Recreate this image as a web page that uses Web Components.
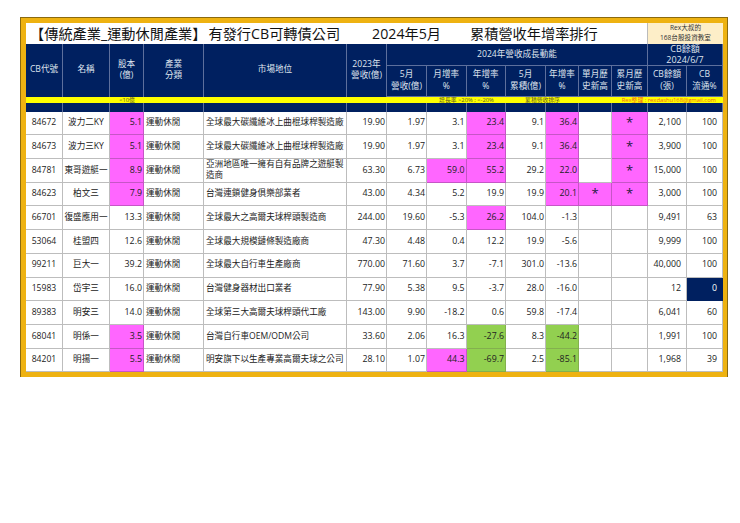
<!DOCTYPE html>
<html lang="zh-Hant">
<head>
<meta charset="utf-8">
<title>CB ranking</title>
<style>
  html, body { margin: 0; background: #fff; }
  body {
    padding: 18px 13px 0 21px;
    font-family: "Open Sans", "Noto Sans CJK TC", sans-serif;
    --cols: 37px 47px 34px 60px 143px 40px 40px 39.5px 39.5px 40px 33px 33px 36px 39px 36px;
    --navy: #002060;
    --pink: #ff66ff;
    --green: #92d050;
  }
</style>
</head>
<body>
<cb-sheet>
  <cb-title></cb-title>
  <cb-head></cb-head>
  <cb-note></cb-note>
  <cb-row code="84672" name="波力二KY" cap="5.1:p" pos="全球最大碳纖維冰上曲棍球桿製造廠" rev="19.90" m="1.97" mr="3.1" yr="23.4:p" acc="9.1" ar="36.4:p" hc="*" qty="2,100" flow="100"></cb-row>
  <cb-row code="84673" name="波力三KY" cap="5.1:p" pos="全球最大碳纖維冰上曲棍球桿製造廠" rev="19.90" m="1.97" mr="3.1" yr="23.4:p" acc="9.1" ar="36.4:p" hc="*" qty="3,900" flow="100"></cb-row>
  <cb-row code="84781" name="東哥遊艇一" cap="8.9:p" pos="亞洲地區唯一擁有自有品牌之遊艇製造商" rev="63.30" m="6.73" mr="59.0:p" yr="55.2:p" acc="29.2" ar="22.0:p" hc="*" qty="15,000" flow="100"></cb-row>
  <cb-row code="84623" name="柏文三" cap="7.9:p" pos="台灣連鎖健身俱樂部業者" rev="43.00" m="4.34" mr="5.2" yr="19.9" acc="19.9" ar="20.1:p" hm="*" hc="*" qty="3,000" flow="100"></cb-row>
  <cb-row code="66701" name="復盛應用一" cap="13.3" pos="全球最大之高爾夫球桿頭製造商" rev="244.00" m="19.60" mr="-5.3" yr="26.2:p" acc="104.0" ar="-1.3" qty="9,491" flow="63"></cb-row>
  <cb-row code="53064" name="桂盟四" cap="12.6" pos="全球最大規模鏈條製造廠商" rev="47.30" m="4.48" mr="0.4" yr="12.2" acc="19.9" ar="-5.6" qty="9,999" flow="100"></cb-row>
  <cb-row code="99211" name="巨大一" cap="39.2" pos="全球最大自行車生產廠商" rev="770.00" m="71.60" mr="3.7" yr="-7.1" acc="301.0" ar="-13.6" qty="40,000" flow="100"></cb-row>
  <cb-row code="15983" name="岱宇三" cap="16.0" pos="台灣健身器材出口業者" rev="77.90" m="5.38" mr="9.5" yr="-3.7" acc="28.0" ar="-16.0" qty="12" flow="0:n"></cb-row>
  <cb-row code="89383" name="明安三" cap="14.0" pos="全球第三大高爾夫球桿頭代工廠" rev="143.00" m="9.90" mr="-18.2" yr="0.6" acc="59.8" ar="-17.4" qty="6,041" flow="60"></cb-row>
  <cb-row code="68041" name="明係一" cap="3.5:p" pos="台灣自行車OEM/ODM公司" rev="33.60" m="2.06" mr="16.3" yr="-27.6:g" acc="8.3" ar="-44.2:g" qty="1,991" flow="100"></cb-row>
  <cb-row code="84201" name="明揚一" cap="5.5:p" pos="明安旗下以生產專業高爾夫球之公司" rev="28.10" m="1.07" mr="44.3:p" yr="-69.7:g" acc="2.5" ar="-85.1:g" qty="1,968" flow="39"></cb-row>
</cb-sheet>

<script>
// Outer gold frame
class CbSheet extends HTMLElement {
  constructor() {
    super();
    this.attachShadow({ mode: 'open' });
    this.shadowRoot.innerHTML = `
      <style>
        :host {
          display: block;
          width: 697px;
          border: solid #eeb211;
          border-width: 5px 4px 5px 5px;
          outline: 0.5px solid #8a6a10;
        }
      </style>
      <slot></slot>`;
  }
}

// Title strip with the logo box on the right
class CbTitle extends HTMLElement {
  constructor() {
    super();
    this.attachShadow({ mode: 'open' });
    this.shadowRoot.innerHTML = `
      <style>
        :host {
          display: grid;
          grid-template-columns: 621px 76px;
          height: 20.5px;
          color: #111;
        }
        .main {
          display: flex;
          align-items: center;
          padding-left: 4px;
          font-size: 14.2px;
          white-space: nowrap;
        }
        .when { margin-left: 32px; }
        .rank { margin-left: 29px; }
        .cls { margin-left: 2px; }
        .logo {
          background: #fdeec8;
          border-left: 1px solid #bbb;
          font-size: 6.6px;
          line-height: 10px;
          text-align: center;
          color: #333;
        }
      </style>
      <div class="main">
        <span>【傳統產業_運動休閒產業】</span><span class="cls">有發行CB可轉債公司</span><span class="when">2024年5月</span><span class="rank">累積營收年增率排行</span>
      </div>
      <div class="logo">Rex大叔的<br>168台股投資教室</div>`;
  }
}

// Navy table header, two rows with spans
class CbHead extends HTMLElement {
  constructor() {
    super();
    this.attachShadow({ mode: 'open' });
    const tall = ['CB代號', '名稱', '股本<br>(億)', '產業<br>分類', '市場地位', '2023年<br>營收(億)'];
    const low = ['5月<br>營收(億)', '月增率<br>%', '年增率<br>%', '5月<br>累積(億)', '年增率<br>%', '單月歷<br>史新高', '累月歷<br>史新高', 'CB餘額<br>(張)', 'CB<br>流通%'];
    this.shadowRoot.innerHTML = `
      <style>
        :host {
          display: grid;
          grid-template-columns: var(--cols);
          grid-template-rows: 22.5px 30.5px;
          background: var(--navy);
          color: #dfe4ee;
          font-size: 8.6px;
          line-height: 11.5px;
          text-align: center;
        }
        div {
          display: flex;
          align-items: center;
          justify-content: center;
          box-sizing: border-box;
          border-right: 1px solid #5d6f9c;
          border-bottom: 1px solid #5d6f9c;
        }
        .tall { grid-row: span 2; border-bottom: 0; }
        .wide { grid-column: span 7; }
        .stock { grid-column: span 2; font-size: 9px; }
      </style>
      ${tall.map((t) => `<div class="tall"><span>${t}</span></div>`).join('')}
      <div class="wide">2024年營收成長動能</div>
      <div class="stock"><span>CB餘額<br>2024/6/7</span></div>
      ${low.map((t) => `<div><span>${t}</span></div>`).join('')}`;
  }
}

// Yellow remark bar and the empty navy strip under it
class CbNote extends HTMLElement {
  constructor() {
    super();
    this.attachShadow({ mode: 'open' });
    const strip = Array(15).fill('<i></i>').join('');
    this.shadowRoot.innerHTML = `
      <style>
        :host { display: block; }
        .bar {
          display: grid;
          grid-template-columns: var(--cols);
          height: 6.5px;
          background: #ffff00;
          box-sizing: border-box;
          color: #5a5a20;
          font-size: 5.8px;
          line-height: 6.5px;
          white-space: nowrap;
        }
        .bar span { text-align: center; }
        .cap { grid-column: 3; }
        .up { grid-column: 8 / span 2; }
        .acc { grid-column: 10 / span 2; }
        .bar .mail { grid-column: 12 / span 4; color: #f0641e; text-align: right; padding-right: 7px; }
        .strip {
          display: grid;
          grid-template-columns: var(--cols);
          height: 8.5px;
          background: var(--navy);
        }
        i { border-right: 1px solid #5d6f9c; }
      </style>
      <div class="bar">
        <span class="cap">&lt;10億</span>
        <span class="up">增長率 &gt;20% ; &lt;-20%</span>
        <span class="acc">累積營收排序</span>
        <span class="mail">Rex整理 : rexdashu168@gmail.com</span>
      </div>
      <div class="strip">${strip}</div>`;
  }
}

// One company row. Values may carry a fill flag: "5.1:p" pink, ":g" green, ":n" navy
class CbRow extends HTMLElement {
  constructor() {
    super();
    this.attachShadow({ mode: 'open' });
  }

  connectedCallback() {
    this.render();
  }

  cell(attr, kind) {
    const [text, fill] = (this.getAttribute(attr) || '').split(':');
    return `<div class="${kind} ${fill || ''}"><span>${text}</span></div>`;
  }

  star(attr) {
    const on = this.getAttribute(attr);
    return `<div class="star ${on ? 'p' : ''}"><span>${on || ''}</span></div>`;
  }

  render() {
    this.shadowRoot.innerHTML = `
      <style>
        :host {
          display: grid;
          grid-template-columns: var(--cols);
          height: 23.73px;
          color: #222;
          font-size: 8.6px;
          line-height: 11.5px;
        }
        div {
          display: flex;
          align-items: center;
          box-sizing: border-box;
          border-right: 1px solid #bdbdbd;
          border-bottom: 1px solid #bdbdbd;
          white-space: nowrap;
        }
        .mid { justify-content: center; }
        .num { justify-content: flex-end; padding-right: 1px; font-size: 8.8px; }
        .qty { justify-content: flex-end; padding-right: 5px; font-size: 8.8px; }
        .txt { padding-left: 2px; }
        .pos { white-space: normal; }
        .star { justify-content: center; font-size: 13px; }
        .star span { color: #1d1d40; }
        .thick { border-right-width: 1.5px; }
        .p { background: var(--pink); border-color: #c655c6; }
        .g { background: var(--green); border-color: #83b04e; }
        .n { background: var(--navy); color: #fff; border-color: var(--navy); }
      </style>
      ${this.cell('code', 'mid thick')}
      ${this.cell('name', 'mid thick')}
      ${this.cell('cap', 'num')}
      <div class="txt">運動休閒</div>
      ${this.cell('pos', 'txt pos')}
      ${this.cell('rev', 'num')}
      ${this.cell('m', 'num')}
      ${this.cell('mr', 'num')}
      ${this.cell('yr', 'num')}
      ${this.cell('acc', 'num')}
      ${this.cell('ar', 'num')}
      ${this.star('hm')}
      ${this.star('hc')}
      ${this.cell('qty', 'qty')}
      ${this.cell('flow', 'qty')}`;
  }
}

customElements.define('cb-sheet', CbSheet);
customElements.define('cb-title', CbTitle);
customElements.define('cb-head', CbHead);
customElements.define('cb-note', CbNote);
customElements.define('cb-row', CbRow);
</script>
</body>
</html>
